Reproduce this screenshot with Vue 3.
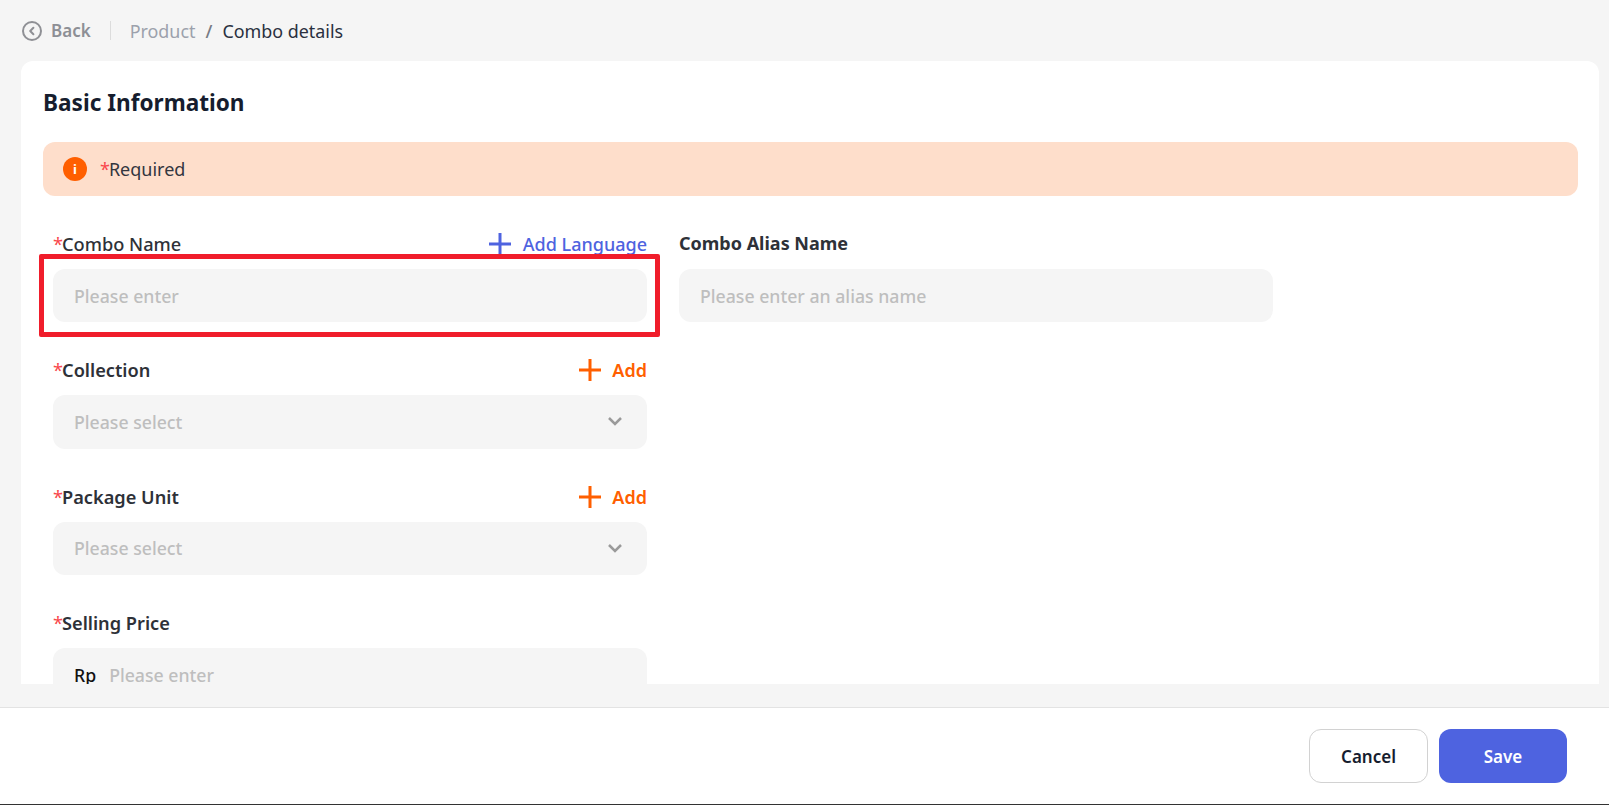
<script setup>
const fields = [
  { label: 'Collection', action: 'Add', placeholder: 'Please select', select: true },
  { label: 'Package Unit', action: 'Add', placeholder: 'Please select', select: true },
  { label: 'Selling Price', placeholder: 'Please enter', prefix: 'Rp' }
]
</script>

<template>
  <div class="page">
    <header class="crumbs">
      <svg class="back-icon" viewBox="0 0 20 20" width="20" height="20" fill="none" stroke="#8f9095" stroke-width="2">
        <circle cx="10" cy="10" r="9" />
        <path d="M11.4 6.8 8.2 10l3.2 3.2" stroke-linecap="round" stroke-linejoin="round" />
      </svg>
      <span class="back">Back</span>
      <i class="divider"></i>
      <span class="product">Product</span>
      <span class="slash">/</span>
      <span class="current">Combo details</span>
    </header>

    <main class="card">
      <h1 class="title">Basic Information</h1>
      <div class="alert">
        <span class="alert-icon">i</span>
        <span class="alert-text"><b class="star">*</b>Required</span>
      </div>

      <div class="form">
        <div class="column">
          <div class="field">
            <div class="label-row">
              <label class="label regular"><b class="star">*</b>Combo Name</label>
              <a class="action blue">
                <svg viewBox="0 0 22 22" width="22" height="22"><path d="M11 0v22M0 11h22" stroke="#4e63e0" stroke-width="3" /></svg>
                Add Language
              </a>
            </div>
            <div class="control">
              <span class="placeholder">Please enter</span>
              <i class="annotation"></i>
            </div>
          </div>

          <div v-for="f in fields" :key="f.label" class="field">
            <div class="label-row">
              <label class="label"><b class="star">*</b>{{ f.label }}</label>
              <a v-if="f.action" class="action orange">
                <svg viewBox="0 0 22 22" width="22" height="22"><path d="M11 0v22M0 11h22" stroke="#ff5f00" stroke-width="3" /></svg>
                {{ f.action }}
              </a>
            </div>
            <div class="control">
              <span v-if="f.prefix" class="prefix">{{ f.prefix }}</span>
              <span class="placeholder">{{ f.placeholder }}</span>
              <svg v-if="f.select" class="chevron" viewBox="0 0 14 9" width="14" height="9" fill="none" stroke="#9a9a9a" stroke-width="2.5">
                <path d="M1 1l6 6 6-6" />
              </svg>
            </div>
          </div>
        </div>

        <div class="column">
          <div class="field">
            <div class="label-row alias-row">
              <label class="label alias">Combo Alias Name</label>
            </div>
            <div class="control">
              <span class="placeholder">Please enter an alias name</span>
            </div>
          </div>
        </div>
      </div>
    </main>

    <div class="spacer"></div>

    <footer class="footer">
      <button class="btn cancel">Cancel</button>
      <button class="btn save">Save</button>
    </footer>
  </div>
</template>

<style>
html, body { margin: 0; padding: 0; background: #f5f5f5; overflow: hidden; }
</style>

<style scoped>
.page {
  width: 1609px;
  height: 805px;
  display: flex;
  flex-direction: column;
  background: #f5f5f5;
  font-family: "Noto Sans", "Open Sans", sans-serif;
  box-sizing: border-box;
  overflow: hidden;
}
.crumbs {
  height: 61px;
  flex: none;
  display: flex;
  align-items: center;
  padding-left: 22px;
  font-size: 17.9px;
  box-sizing: border-box;
}
.back-icon { flex: none; }
.back { margin-left: 9px; font-size: 17px; font-weight: 600; color: #8d8f95; }
.divider { width: 1px; height: 19px; background: #dcdcdc; margin: 0 19px; }
.product { color: #9ca1ac; }
.slash { color: #777b84; margin: 0 10px; font-weight: 500; }
.current { color: #2a3040; }

.card {
  height: 623px;
  flex: none;
  margin: 0 10px 0 21px;
  padding: 0 21px 0 22px;
  background: #fff;
  border-radius: 12px 12px 0 0;
  overflow: hidden;
  box-sizing: border-box;
}
.title {
  margin: 0;
  padding-top: 27px;
  height: 81px;
  box-sizing: border-box;
  font-size: 22.6px;
  line-height: 30px;
  font-weight: 700;
  color: #161d2e;
}
.alert {
  height: 54px;
  display: flex;
  align-items: center;
  padding-left: 20px;
  background: #fedecb;
  border-radius: 12px;
}
.alert-icon {
  width: 24px;
  height: 24px;
  border-radius: 50%;
  background: #ff5f00;
  color: #fff;
  font-size: 13px;
  font-weight: 700;
  text-align: center;
  line-height: 24px;
}
.alert-text { margin-left: 13px; font-size: 18px; color: #33363f; }
.star { color: #f9484c; font-weight: 400; margin-right: -1px; }

.form {
  display: flex;
  gap: 32px;
  padding: 31px 0 0 10px;
}
.column {
  width: 594px;
  display: flex;
  flex-direction: column;
  gap: 31px;
}
.field { display: flex; flex-direction: column; gap: 8px; }
.label-row {
  height: 34px;
  display: flex;
  align-items: center;
  justify-content: space-between;
}
.alias-row { align-items: flex-start; line-height: 32px; }
.label { font-size: 18.2px; font-weight: 600; color: #2e3138; }
.label.regular { font-weight: 500; }
.label.alias { font-weight: 700; font-size: 18px; }
.action { display: flex; align-items: center; gap: 12px; font-size: 18px; font-weight: 500; }
.blue { color: #4e63e0; }
.orange { color: #ff5f00; font-weight: 600; gap: 11px; }

.control {
  position: relative;
  height: 53.33px;
  display: flex;
  align-items: center;
  padding: 0 20px 0 21px;
  background: #f5f5f5;
  border-radius: 12px;
  font-size: 17.7px;
}
.placeholder { color: #bebebe; font-weight: 500; }
.prefix { margin-right: 13px; color: #111; font-weight: 500; }
.chevron { margin-left: auto; margin-right: 5px; }
.annotation {
  position: absolute;
  top: -15.5px;
  left: -14.5px;
  right: -13px;
  bottom: -14.5px;
  border: 5px solid #f01d2b;
  border-radius: 2px;
  pointer-events: none;
}

.spacer { height: 23px; flex: none; }
.footer {
  flex: 1;
  display: flex;
  align-items: center;
  justify-content: flex-end;
  gap: 11px;
  padding: 0 42px 0 0;
  background: #fff;
  border-top: 1px solid #e3e3e3;
  border-bottom: 1px solid #333;
  box-sizing: border-box;
}
.btn {
  height: 54px;
  border-radius: 12px;
  font-family: inherit;
  font-size: 17px;
  font-weight: 600;
  box-sizing: border-box;
  padding: 0;
}
.cancel { width: 119px; background: #fff; border: 1px solid #d2d2d2; color: #161d2e; }
.save { width: 128px; background: #4e63e0; border: none; color: #fff; }
</style>
